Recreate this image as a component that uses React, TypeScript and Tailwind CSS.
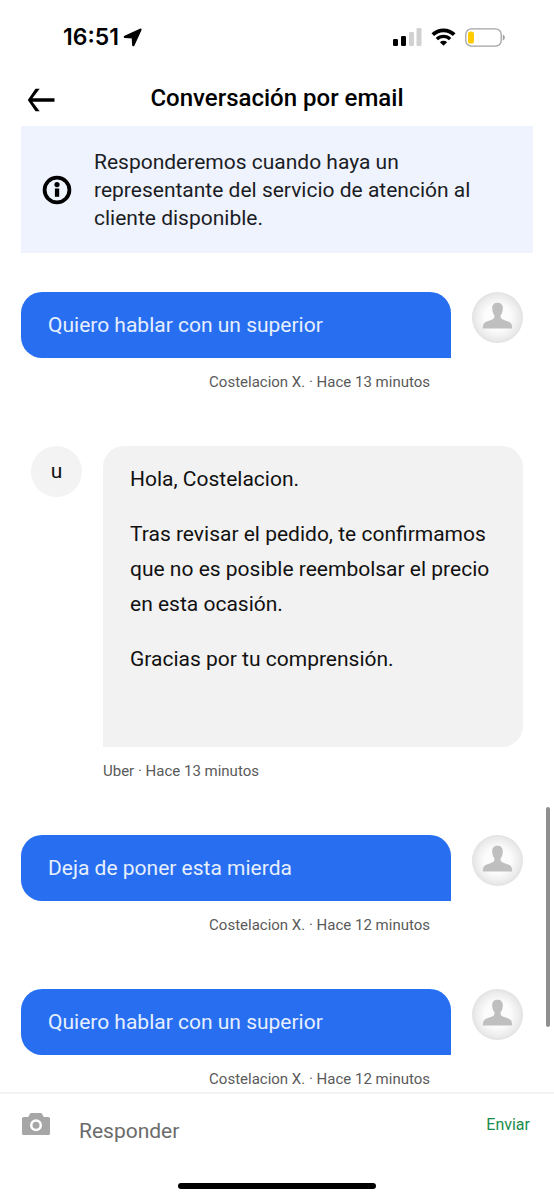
import React from "react";

type Message = {
  id: number;
  own: boolean;
  author: string;
  age: string;
  paragraphs: string[];
};

const messages: Message[] = [
  { id: 1, own: true, author: "Costelacion X.", age: "Hace 13 minutos", paragraphs: ["Quiero hablar con un superior"] },
  {
    id: 2,
    own: false,
    author: "Uber",
    age: "Hace 13 minutos",
    paragraphs: [
      "Hola, Costelacion.",
      "Tras revisar el pedido, te confirmamos que no es posible reembolsar el precio en esta ocasión.",
      "Gracias por tu comprensión.",
    ],
  },
  { id: 3, own: true, author: "Costelacion X.", age: "Hace 12 minutos", paragraphs: ["Deja de poner esta mierda"] },
  { id: 4, own: true, author: "Costelacion X.", age: "Hace 12 minutos", paragraphs: ["Quiero hablar con un superior"] },
];

function StatusBar() {
  return (
    <div className="flex h-[74px] items-center justify-between pr-12 pl-[63px]">
      <div className="flex items-center gap-1">
        <span className="font-[Inter,sans-serif] text-[23px] leading-7 font-semibold text-black">16:51</span>
        <svg className="h-[19px] w-[19px]" viewBox="0 0 19 19" aria-hidden="true">
          <path
            d="M17.200 1.200 1.800 8.200c-.7.300-.6 1.100.2 1.200l7.300.4.400 7.300c0 .8.900.9 1.200.2L17.900 1.900c.2-.5-.2-.9-.7-.7z"
            fill="#000"
            stroke="#000"
            strokeWidth="1.200"
            strokeLinejoin="round"
          />
        </svg>
      </div>
      <div className="flex items-center gap-[9px]">
        <svg className="h-[18px] w-[29px]" viewBox="0 0 29 18" aria-hidden="true">
          <rect x="0" y="11" width="5" height="7" rx="1.300" fill="#000" />
          <rect x="8" y="8" width="5" height="10" rx="1.300" fill="#000" />
          <rect x="16" y="4" width="5" height="14" rx="1.300" fill="#d1d1d1" />
          <rect x="23.500" y="0" width="5" height="18" rx="1.300" fill="#d1d1d1" />
        </svg>
        <svg className="h-[18px] w-[25px]" viewBox="0 0 25 18" aria-hidden="true">
          <path d="M1.800 6.700a15.200 15.200 0 0 1 21.400 0" fill="none" stroke="#000" strokeWidth="3.800" />
          <path d="M5.900 11.100a9.400 9.400 0 0 1 13.200 0" fill="none" stroke="#000" strokeWidth="3.400" />
          <path d="M12.500 17.700 8.900 14.200a5.200 5.200 0 0 1 7.200 0z" fill="#000" />
        </svg>
        <svg className="h-[19px] w-[41px]" viewBox="0 0 41 19" aria-hidden="true">
          <rect x=".8" y=".8" width="35.400" height="17.400" rx="5.600" fill="none" stroke="#a3a3a3" strokeWidth="1.300" />
          <rect x="3" y="3.500" width="6" height="12" rx="2.600" fill="#fc0" />
          <path d="M37.800 6.500c2.700 1 2.700 5 0 6z" fill="#a3a3a3" />
        </svg>
      </div>
    </div>
  );
}

function Header() {
  return (
    <header className="grid h-[52px] grid-cols-[auto_1fr_auto] items-center px-[27px] pb-1">
      <button type="button" aria-label="Volver" className="pt-1">
        <svg className="h-6 w-7" viewBox="0 0 28 24" aria-hidden="true">
          <path d="M8.500 .800h4.200L5.400 10.300h22.100v3.400H5.400l7.300 9.500H8.500L.8 12z" fill="#000" />
        </svg>
      </button>
      <h1 className="text-center text-[24px] leading-7 font-medium text-black">Conversación por email</h1>
      <span className="w-7" />
    </header>
  );
}

function Notice() {
  return (
    <section className="mx-[21px] flex items-center gap-[22px] bg-[#eff3fe] px-[21px] pt-[22px] pb-[21px]">
      <svg className="h-[30px] w-[30px] shrink-0" viewBox="0 0 30 30" aria-hidden="true">
        <circle cx="15" cy="15" r="12.400" fill="none" stroke="#000" strokeWidth="3.800" />
        <circle cx="15" cy="9.600" r="2.600" fill="#000" />
        <path d="M12.900 13.500h4.300v8.300h-4.300z" fill="#000" />
      </svg>
      <p className="text-[21px] leading-7 text-[#1b1d24]">
        Responderemos cuando haya un representante del servicio de atención al cliente disponible.
      </p>
    </section>
  );
}

function PersonAvatar() {
  return (
    <svg className="h-[51px] w-[51px] shrink-0" viewBox="0 0 51 51" role="img" aria-label="Foto de perfil">
      <defs>
        <radialGradient id="avatar-fill">
          <stop offset="0.500" stopColor="#fcfcfc" />
          <stop offset="0.850" stopColor="#ececec" />
          <stop offset="1" stopColor="#e2e2e2" />
        </radialGradient>
      </defs>
      <circle cx="25.500" cy="25.500" r="25.500" fill="url(#avatar-fill)" />
      <path
        d="M25.500 10.800c3.400 0 5.400 2.100 5.300 5.400-.1 3-.8 5.400-2 6.900-.5.700-.3 2.600.4 3.300 1.800 1.700 6 2.100 8.600 3.800 1.800 1.200 2.400 3.200 2.400 6.300H10.800c0-3.100.6-5.100 2.400-6.300 2.600-1.700 6.800-2.100 8.600-3.800.7-.7.900-2.600.4-3.300-1.200-1.500-1.900-3.900-2-6.900-.1-3.300 1.900-5.400 5.300-5.400z"
        fill="#bfbfbf"
      />
    </svg>
  );
}

function Meta({ message }: { message: Message }) {
  return (
    <p className="mt-3 text-[15px] leading-6 text-[#5a5a5a]">
      {message.author} · {message.age}
    </p>
  );
}

function OwnMessage({ message }: { message: Message }) {
  return (
    <li className="flex items-start gap-[21px] pr-[31px] pl-[21px]">
      <div className="min-w-0 flex-1">
        <div className="rounded-[21px] rounded-br-none bg-[#276ef1] px-[27px] py-[19px] text-[21px] leading-7 text-[#e6effe]">
          {message.paragraphs[0]}
        </div>
        <div className="pr-[21px] text-right">
          <Meta message={message} />
        </div>
      </div>
      <PersonAvatar />
    </li>
  );
}

function AgentMessage({ message }: { message: Message }) {
  return (
    <li className="flex items-start gap-[21px] px-[31px]">
      <div className="flex h-[51px] w-[51px] shrink-0 items-center justify-center rounded-full bg-[#f3f3f3] text-[21px] text-[#111]">
        u
      </div>
      <div className="min-w-0 flex-1">
        <div className="flex flex-col gap-5 rounded-[21px] rounded-bl-none bg-[#f2f2f2] px-[27px] pt-4 pb-[70px] text-[21px] leading-[35px] text-[#111]">
          {message.paragraphs.map((text) => (
            <p key={text}>{text}</p>
          ))}
        </div>
        <Meta message={message} />
      </div>
    </li>
  );
}

function ReplyBar() {
  return (
    <footer className="border-t-2 border-[#f3f3f3] bg-white">
      <form className="flex h-[74px] items-center gap-7 pr-6 pl-[21px]" onSubmit={(event) => event.preventDefault()}>
        <button type="button" aria-label="Adjuntar foto" className="self-start pt-[19px]">
          <svg className="h-[23px] w-[30px]" viewBox="0 0 30 23" aria-hidden="true">
            <path
              fillRule="evenodd"
              d="M2.500 4h4.800l1.400-2.800Q9.300 0 10.600 0h8.800q1.300 0 1.900 1.200L22.700 4h4.800Q29 4 29 5.500v15q0 1.500-1.500 1.500h-25Q1 22 1 20.500v-15Q1 4 2.500 4zM15 6.300a6 6 0 1 0 0 12 6 6 0 0 0 0-12zm0 2.500a3.500 3.500 0 1 1 0 7 3.500 3.500 0 0 1 0-7z"
              fill="#a6a6a6"
            />
          </svg>
        </button>
        <input
          type="text"
          aria-label="Responder"
          placeholder="Responder"
          className="min-w-0 flex-1 bg-transparent text-[21px] leading-7 text-black outline-none placeholder:text-[#6b6b6b]"
        />
        <button type="submit" className="self-start pt-[19px] text-[16px] leading-6 text-[#1a8d4b]">
          Enviar
        </button>
      </form>
      <div className="flex h-8 items-start justify-center pt-[15px]">
        <div className="h-[6px] w-[198px] rounded-full bg-black" />
      </div>
    </footer>
  );
}

export default function App() {
  return (
    <div className="relative flex min-h-screen flex-col bg-white font-[Roboto,sans-serif]">
      <StatusBar />
      <Header />
      <main className="flex-1">
        <Notice />
        <ul className="mt-[39px] flex flex-col gap-[52px]">
          {messages.map((message) =>
            message.own ? (
              <OwnMessage key={message.id} message={message} />
            ) : (
              <AgentMessage key={message.id} message={message} />
            ),
          )}
        </ul>
      </main>
      <ReplyBar />
      <div className="absolute top-[807px] right-1 h-[220px] w-1 rounded-full bg-[#8f8f8f]" aria-hidden="true" />
    </div>
  );
}
